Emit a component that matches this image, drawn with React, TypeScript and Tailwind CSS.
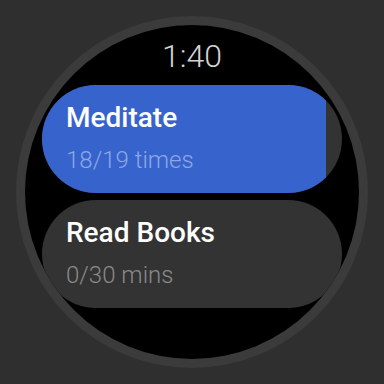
const habits = [
  { name: 'Meditate', done: 18, goal: 19, unit: 'times' },
  { name: 'Read Books', done: 0, goal: 30, unit: 'mins' },
];

const CARD_WIDTH = 300;

const HabitChip = ({ name, done, goal, unit }: (typeof habits)[number]) => {
  const fill = Math.round((done / goal) * CARD_WIDTH);
  return (
    <div className="relative h-[108px] w-[300px] shrink-0 overflow-hidden rounded-full bg-[#333333]">
      {fill > 0 && (
        <div className="absolute inset-y-0 left-0 bg-[#3763cd]" style={{ width: fill }} />
      )}
      <div className="relative flex flex-col pl-[24px] pt-[17px]">
        <p className="m-0 text-[28px] leading-[32px] font-medium text-white">{name}</p>
        <p
          className={`m-0 mt-[12px] text-[24px] leading-[28px] font-light ${
            done > 0 ? 'text-[#8fa7e3]' : 'text-[#8a8a8a]'
          }`}
        >
          {done}/{goal} {unit}
        </p>
      </div>
    </div>
  );
};

export default function App() {
  return (
    <div
      className="flex h-[384px] w-[384px] items-center justify-center bg-[#2f2f2f]"
      style={{ fontFamily: 'Roboto, "Liberation Sans", sans-serif' }}
    >
      <div className="h-[352px] w-[352px] rounded-full bg-[#3b3b3b] p-[9px]">
        <div className="flex h-full w-full flex-col items-center overflow-hidden rounded-full bg-black">
          <p className="m-0 mt-[13px] text-[32px] leading-[36px] font-light text-[#d4d4d4]">1:40</p>
          <div className="mt-[11px] flex flex-col gap-[7px]">
            {habits.map((h) => (
              <HabitChip key={h.name} {...h} />
            ))}
          </div>
        </div>
      </div>
    </div>
  );
}
